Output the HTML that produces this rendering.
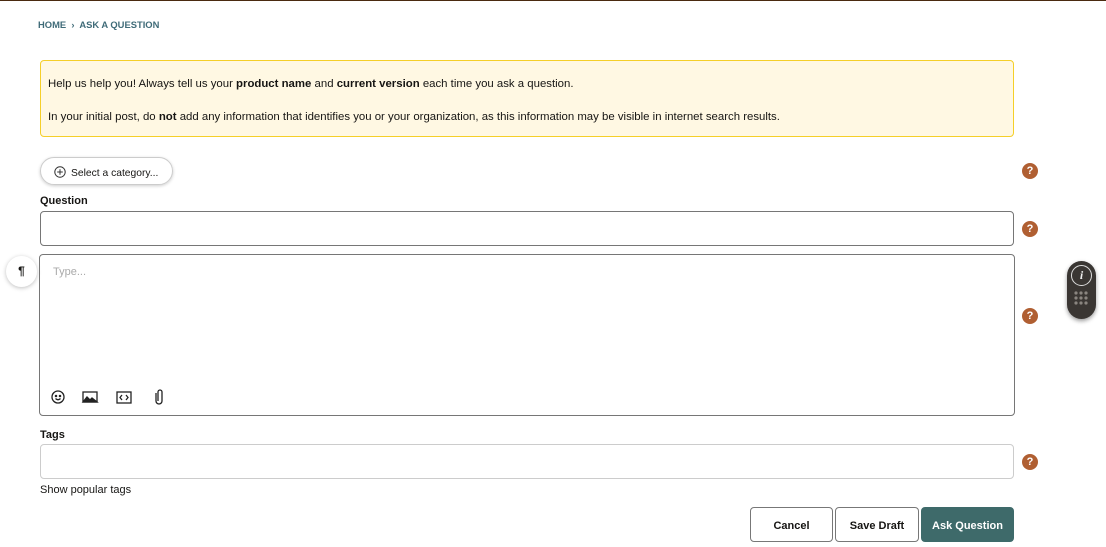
<!DOCTYPE html>
<html><head><meta charset="utf-8"><style>
*{box-sizing:border-box}
body{margin:0;width:1106px;height:547px;background:#fff;font-family:"Liberation Sans",sans-serif;color:#161513;position:relative;overflow:hidden}
.top{position:absolute;left:0;top:0;width:1106px;height:1px;background:#4a2a10}
.a{position:absolute}
.crumb{left:38px;top:19px;font-size:9.4px;font-weight:bold;color:#3f6b78}
.note{left:40px;top:60px;width:974px;height:77px;background:#fff8e3;border:1px solid #f5cf29;border-radius:4px;font-size:11.4px;padding:17px 0 0 7px;line-height:12px}
.note p{margin:0 0 21px}
.cat{left:40px;top:157px;width:133px;height:28px;border:1px solid #ccc;border-radius:14px;box-shadow:0 1px 3px rgba(0,0,0,.2);font-size:10.3px;padding:8px 0 0 13px}
.cat svg{vertical-align:-2px;margin-right:5px}
.lbl{font-size:11px;font-weight:bold}
.inp{border:1px solid #767676;border-radius:4px}
.q{width:20px;height:16px}
.q div{width:16px;height:16px;border-radius:50%;background:#b05f32;color:#fff;font-size:11px;font-weight:bold;text-align:center;line-height:16px}
.btn{top:507px;height:35px;border:1px solid #777;border-radius:4px;font-size:11px;font-weight:bold;text-align:center;line-height:36px}
</style></head><body>
<div class="top"></div>
<div class="a crumb">HOME &nbsp;›&nbsp; ASK A QUESTION</div>
<div class="a note"><p>Help us help you! Always tell us your <b>product name</b> and <b>current version</b> each time you ask a question.</p><p>In your initial post, do <b>not</b> add any information that identifies you or your organization, as this information may be visible in internet search results.</p></div>
<div class="a cat"><svg width="12" height="12" fill="none" stroke="#333" stroke-width="1"><circle cx="6" cy="6" r="5.2"/><path d="M6 3.2v5.6M3.2 6h5.6"/></svg>Select a category...</div>
<div class="a q" style="left:1022px;top:163px"><div>?</div></div>
<div class="a lbl" style="left:40px;top:195px">Question</div>
<div class="a inp" style="left:40px;top:211px;width:974px;height:35px"></div>
<div class="a q" style="left:1022px;top:221px"><div>?</div></div>
<div class="a" style="left:6px;top:256px;width:31px;height:31px;border-radius:50%;box-shadow:0 1px 4px rgba(0,0,0,.25);background:#fff;font-size:12px;font-weight:bold;text-align:center;line-height:31px">¶</div>
<div class="a inp" style="left:39px;top:254px;width:976px;height:162px"></div>
<div class="a" style="left:53px;top:266px;font-size:11px;color:#aaa">Type...</div>
<svg class="a" style="left:50px;top:389px" width="120" height="18" fill="none" stroke="#222" stroke-width="1.3">
<circle cx="8" cy="8" r="6"/><circle cx="6" cy="7" r=".6" fill="#222"/><circle cx="10" cy="7" r=".6" fill="#222"/><path d="M5.5 9.5q2.5 2.5 5 0"/>
<rect x="33" y="3" width="14" height="10"/><path d="M33 13l4-5 3 3 2-2 5 4z" fill="#222"/>
<rect x="67" y="3" width="14" height="11"/><path d="M72 6l-2 2.5 2 2.5M76 6l2 2.5-2 2.5"/>
<path d="M106 4v8a3 3 0 0 0 6 0V3a2 2 0 0 0-4 0v9"/>
</svg>
<div class="a q" style="left:1022px;top:308px"><div>?</div></div>
<div class="a" style="left:1067px;top:261px;width:29px;height:58px;border-radius:15px;background:#3a3633;box-shadow:0 2px 4px rgba(0,0,0,.4)">
<div style="position:absolute;left:4px;top:4px;width:21px;height:21px;border:1.5px solid #ddd;border-radius:50%;color:#eee;font:italic bold 12px 'Liberation Serif',serif;text-align:center;line-height:18px">i</div>
<svg style="position:absolute;left:7px;top:30px" width="16" height="16" fill="#8a8580"><circle cx="2" cy="2" r="1.6"/><circle cx="7" cy="2" r="1.6"/><circle cx="12" cy="2" r="1.6"/><circle cx="2" cy="7" r="1.6"/><circle cx="7" cy="7" r="1.6"/><circle cx="12" cy="7" r="1.6"/><circle cx="2" cy="12" r="1.6"/><circle cx="7" cy="12" r="1.6"/><circle cx="12" cy="12" r="1.6"/></svg>
</div>
<div class="a lbl" style="left:40px;top:429px">Tags</div>
<div class="a" style="left:40px;top:444px;width:974px;height:35px;border:1px solid #ccc;border-radius:4px"></div>
<div class="a q" style="left:1022px;top:454px"><div>?</div></div>
<div class="a" style="left:40px;top:484px;font-size:11px">Show popular tags</div>
<div class="a btn" style="left:750px;width:83px">Cancel</div>
<div class="a btn" style="left:835px;width:84px">Save Draft</div>
<div class="a btn" style="left:921px;width:93px;background:#3e6a6a;border-color:#3e6a6a;color:#fff">Ask Question</div>
</body></html>
